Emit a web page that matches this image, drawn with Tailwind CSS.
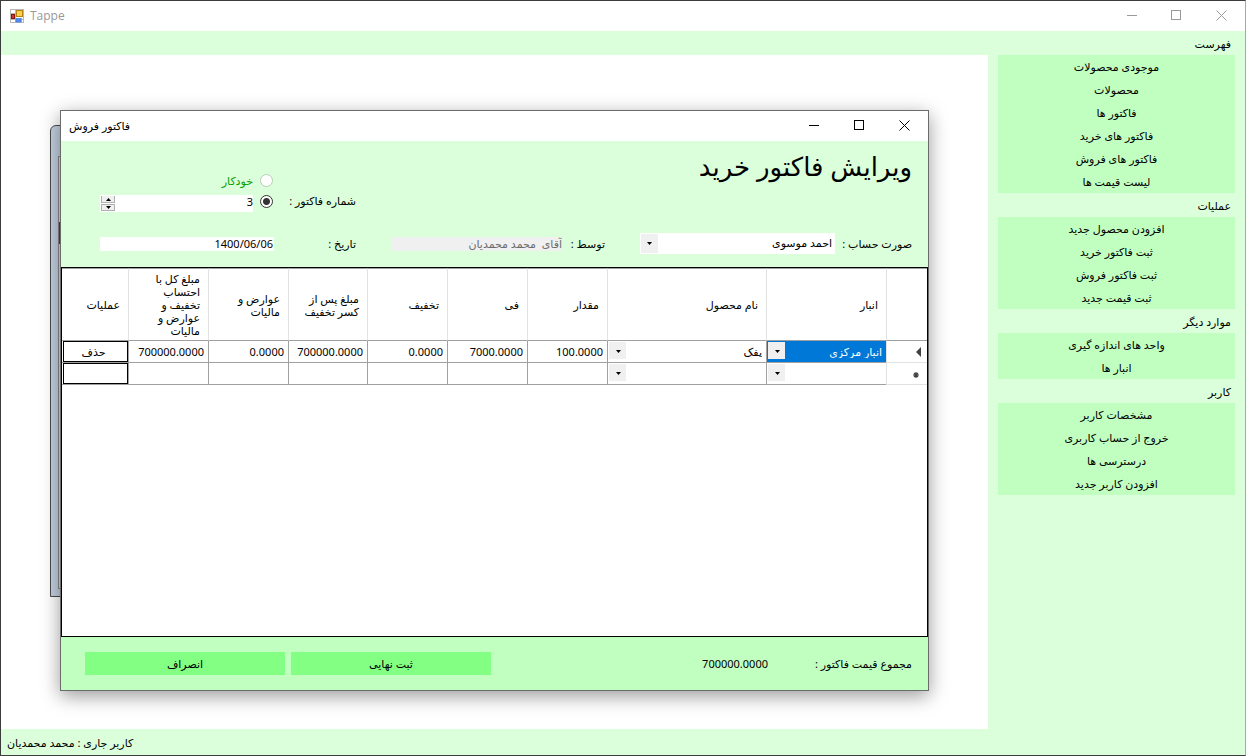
<!DOCTYPE html>
<html lang="fa" dir="rtl">
<head>
<meta charset="utf-8">
<title>Tappe</title>
<script src="https://cdn.jsdelivr.net/npm/@tailwindcss/browser@4"></script>
</head>
<body class="relative flex min-h-screen flex-col border border-[#3c3c3c] border-r-[#a8a8a8] bg-white font-['Noto_Sans','DejaVu_Sans',sans-serif] text-[11px] leading-[13px] text-black">

<header dir="ltr" class="flex h-[30px] items-center justify-between pl-[9px]">
  <div class="flex items-center gap-[6px]">
    <svg class="size-[14px]" viewBox="0 0 14 14" aria-hidden="true">
      <rect x=".5" y=".5" width="13" height="13" fill="#fff" stroke="#b8b8b8"/>
      <path d="M5.5 0v14M0 4.500h6M0 10.500h14M11.500 9v5" stroke="#b8b8b8" fill="none"/>
      <rect x="1.500" y="5.500" width="3" height="4" fill="#c8372f" stroke="#8c1410"/>
      <rect x="6.500" y="1.500" width="6" height="6" fill="#fbcf4a" stroke="#b5850f"/>
      <rect x="6" y="9.500" width="5" height="3.500" fill="#4f8ef0" stroke="#3c72d0" stroke-width=".6"/>
    </svg>
    <span class="font-['Open_Sans',sans-serif] text-[12px] leading-4 text-[#999999]">Tappe</span>
  </div>
  <div class="flex text-[#999999]">
    <button aria-label="Minimize" class="flex h-[30px] w-[45px] items-center justify-center pr-px pb-px"><svg class="size-[11px]" viewBox="0 0 11 11" fill="none" stroke="currentColor"><path d="M.5 5.500H10.500" shape-rendering="crispEdges"/></svg></button>
    <button aria-label="Maximize" class="flex h-[30px] w-[45px] items-center justify-center pb-px"><svg class="size-[11px]" viewBox="0 0 11 11" fill="none" stroke="currentColor"><rect x=".5" y=".5" width="9" height="9" shape-rendering="crispEdges"/></svg></button>
    <button aria-label="Close" class="flex h-[30px] w-[46px] items-center justify-center pr-px pb-px"><svg class="size-[11px]" viewBox="0 0 11 11" fill="none" stroke="currentColor"><path d="M.5.5l10 10M10.500.5l-10 10"/></svg></button>
  </div>
</header>

<div class="flex flex-1">
  <nav class="w-[257px] bg-[#dbffdb] px-[10px]">
    <h2 class="flex h-6 items-center pt-px pr-1">فهرست</h2>
    <ul class="bg-[#c1ffc1] text-center">
      <li><button class="block h-[23px] w-full">موجودی محصولات</button></li>
      <li><button class="block h-[23px] w-full">محصولات</button></li>
      <li><button class="block h-[23px] w-full">فاکتور ها</button></li>
      <li><button class="block h-[23px] w-full">فاکتور های خرید</button></li>
      <li><button class="block h-[23px] w-full">فاکتور های فروش</button></li>
      <li><button class="block h-[23px] w-full">لیست قیمت ها</button></li>
    </ul>
    <h2 class="flex h-6 items-center pt-px pr-1">عملیات</h2>
    <ul class="bg-[#c1ffc1] text-center">
      <li><button class="block h-[23px] w-full">افزودن محصول جدید</button></li>
      <li><button class="block h-[23px] w-full">ثبت فاکتور خرید</button></li>
      <li><button class="block h-[23px] w-full">ثبت فاکتور فروش</button></li>
      <li><button class="block h-[23px] w-full">ثبت قیمت جدید</button></li>
    </ul>
    <h2 class="flex h-6 items-center pt-px pr-1">موارد دیگر</h2>
    <ul class="bg-[#c1ffc1] text-center">
      <li><button class="block h-[23px] w-full">واحد های اندازه گیری</button></li>
      <li><button class="block h-[23px] w-full">انبار ها</button></li>
    </ul>
    <h2 class="flex h-6 items-center pt-px pr-1">کاربر</h2>
    <ul class="bg-[#c1ffc1] text-center">
      <li><button class="block h-[23px] w-full">مشخصات کاربر</button></li>
      <li><button class="block h-[23px] w-full">خروج از حساب کاربری</button></li>
      <li><button class="block h-[23px] w-full">درسترسی ها</button></li>
      <li><button class="block h-[23px] w-full">افزودن کاربر جدید</button></li>
    </ul>
  </nav>
  <div class="flex flex-1 flex-col">
    <div class="h-6 bg-[#dbffdb]"></div>
    <main class="flex-1"></main>
    <footer class="flex h-[26px] items-center justify-end bg-[#dbffdb] pl-[6px]">کاربر جاری : محمد محمدیان</footer>
  </div>
</div>

<!-- Inactive child window behind the invoice -->
<div class="absolute top-[124px] left-[49px] h-[472px] w-[300px] rounded-t-md border border-[#4a4a4a] bg-[#c3d1e0] pt-[30px] pl-[7px]">
  <div class="h-[433px] border border-[#8a8a8a] bg-[#dcdcdc] pt-[65px]"><div class="h-[22px] bg-[#1c4f8a]"></div></div>
</div>

<!-- Invoice window -->
<section aria-label="فاکتور فروش" class="absolute top-[109px] left-[59px] flex h-[581px] w-[869px] flex-col border border-[#6b6b6b] bg-white shadow-[0_5px_18px_rgba(0,0,0,0.4)]">
  <div dir="ltr" class="flex h-[30px] items-center justify-between pl-2">
    <span class="text-[11px] leading-4">فاکتور فروش</span>
    <div class="flex">
      <button aria-label="Minimize" class="flex h-[30px] w-[45px] items-center justify-center pb-px"><svg class="size-[11px]" viewBox="0 0 11 11" fill="none" stroke="currentColor"><path d="M.5 5.500H10.500" shape-rendering="crispEdges"/></svg></button>
      <button aria-label="Maximize" class="flex h-[30px] w-[46px] items-center justify-center pb-px"><svg class="size-[11px]" viewBox="0 0 11 11" fill="none" stroke="currentColor"><rect x=".5" y=".5" width="9" height="9" shape-rendering="crispEdges"/></svg></button>
      <button aria-label="Close" class="flex h-[30px] w-[46px] items-center justify-center pr-px pb-px"><svg class="size-[11px]" viewBox="0 0 11 11" fill="none" stroke="currentColor"><path d="M.5.5l10 10M10.500.5l-10 10"/></svg></button>
    </div>
  </div>

  <form class="flex min-h-0 flex-1 flex-col">
    <div class="grid h-[126px] grid-cols-[77px_195px_35px_43px_170px_36px_82px_174px] grid-rows-[92px_21px] items-center bg-[#dbffdb] pr-4">
      <h1 class="col-span-6 self-start pt-1 text-[26px] leading-[42px]">ویرایش فاکتور خرید</h1>
      <span id="no" class="self-start pt-[53px]">شماره فاکتور :</span>
      <div class="self-start pt-[31px]" role="group" aria-labelledby="no">
        <div class="flex h-[17px] items-center gap-[7px]">
          <input id="auto" type="radio" name="mode" class="mr-[1px] size-[13px] appearance-none rounded-full border border-[#b5cfb5] bg-white">
          <label for="auto" class="text-[#00a000]">خودکار</label>
        </div>
        <div class="mt-[4px] flex h-[17px] items-center gap-[7px]">
          <input type="radio" name="mode" checked aria-label="دستی" class="mr-[1px] size-[13px] shrink-0 appearance-none rounded-full border border-[#333333] bg-[radial-gradient(circle,#333333_3px,#ffffff_4px)]">
          <div class="mt-1 flex h-[17px] min-w-0 flex-1 bg-white">
            <input type="text" value="3" aria-labelledby="no" class="mb-1 min-w-0 flex-1 bg-transparent">
            <div class="ml-px flex w-[14px] flex-col pt-px">
              <button type="button" aria-label="+" class="flex h-[7px] items-center justify-center border border-t-0 border-[#b0b0b0] bg-[#f0f0f0]"><svg class="h-[3px] w-[5px]" viewBox="0 0 5 3"><path d="M0 3L2.500 0 5 3z"/></svg></button>
              <button type="button" aria-label="-" class="mt-px flex h-[7px] items-center justify-center border border-[#b0b0b0] bg-[#f0f0f0]"><svg class="h-[3px] w-[5px]" viewBox="0 0 5 3"><path d="M0 0L2.500 3 5 0z"/></svg></button>
            </div>
          </div>
        </div>
      </div>

      <label for="acc">صورت حساب :</label>
      <div class="relative">
        <select id="acc" class="block h-[21px] w-full appearance-none bg-white pr-[3px] pb-px leading-5"><option>احمد موسوی</option></select>
        <span class="pointer-events-none absolute inset-y-px left-px flex w-[17px] items-center justify-center bg-[#f0f0f0]"><svg class="h-[3px] w-[5px]" viewBox="0 0 5 3"><path d="M0 0L2.500 3 5 0z"/></svg></span>
      </div>
      <span></span>
      <label for="by">توسط :</label>
      <input id="by" type="text" disabled value="آقای  محمد محمدیان" class="h-[14px] w-full bg-[#f0f0f0] pb-px text-[#6d6d6d]">
      <span></span>
      <label for="date">تاریخ :</label>
      <input id="date" type="text" value="1400/06/06" class="h-[14px] w-full bg-white pr-px pb-px">
    </div>

    <div class="min-h-0 flex-1 border border-black bg-white">
      <table class="w-full table-fixed border-separate border-spacing-0">
        <colgroup><col class="w-[41px]"><col class="w-[120px]"><col class="w-[159px]"><col class="w-[80px]"><col class="w-[80px]"><col class="w-[80px]"><col class="w-[79px]"><col class="w-[80px]"><col class="w-[80px]"><col></colgroup>
        <thead>
          <tr class="h-[73px]">
            <th class="border-t border-b border-l border-t-[#a0a0a0] border-b-[#a0a0a0] border-l-[#e2e2e2]"></th>
            <th class="border-t border-b border-l border-t-[#a0a0a0] border-b-[#a0a0a0] border-l-[#e2e2e2] p-0 pr-2 text-right font-normal">انبار</th>
            <th class="border-t border-b border-l border-t-[#a0a0a0] border-b-[#a0a0a0] border-l-[#e2e2e2] p-0 pr-2 text-right font-normal">نام محصول</th>
            <th class="border-t border-b border-l border-t-[#a0a0a0] border-b-[#a0a0a0] border-l-[#e2e2e2] p-0 pr-2 text-right font-normal">مقدار</th>
            <th class="border-t border-b border-l border-t-[#a0a0a0] border-b-[#a0a0a0] border-l-[#e2e2e2] p-0 pr-2 text-right font-normal">فی</th>
            <th class="border-t border-b border-l border-t-[#a0a0a0] border-b-[#a0a0a0] border-l-[#e2e2e2] p-0 pr-2 text-right font-normal">تخفیف</th>
            <th class="border-t border-b border-l border-t-[#a0a0a0] border-b-[#a0a0a0] border-l-[#e2e2e2] p-0 pr-2 text-right font-normal whitespace-nowrap">مبلغ پس از<br>کسر تخفیف</th>
            <th class="border-t border-b border-l border-t-[#a0a0a0] border-b-[#a0a0a0] border-l-[#e2e2e2] p-0 pr-2 text-right font-normal whitespace-nowrap">عوارض و<br>مالیات</th>
            <th class="border-t border-b border-l border-t-[#a0a0a0] border-b-[#a0a0a0] border-l-[#e2e2e2] p-0 pr-2 text-right font-normal whitespace-nowrap">مبلغ کل با<br>احتساب<br>تخفیف و<br>عوارض و<br>مالیات</th>
            <th class="border-t border-b border-t-[#a0a0a0] border-b-[#a0a0a0] p-0 pr-2 text-right font-normal">عملیات</th>
          </tr>
        </thead>
        <tbody>
          <tr class="h-[22px]">
            <td class="border-b border-l border-b-[#e2e2e2] border-l-[#e2e2e2] p-0"><svg class="mr-[6px] h-[10px] w-[5px]" viewBox="0 0 5 10" fill="#404040"><path d="M5 0v10L0 5z"/></svg></td>
            <td class="border-b border-l border-[#a0a0a0] p-0"><div class="relative h-[21px] bg-[#0078d7]"><select aria-label="انبار" class="block h-[21px] w-full appearance-none bg-transparent pr-1 text-white"><option>انبار مركزي</option></select><span class="pointer-events-none absolute top-px left-px flex h-[17px] w-[17px] items-center justify-center bg-[#f0f0f0] pt-px pl-px"><svg class="h-[3px] w-[5px]" viewBox="0 0 5 3"><path d="M0 0L2.500 3 5 0z"/></svg></span></div></td>
            <td class="border-b border-l border-[#a0a0a0] p-0"><div class="relative h-[21px]"><select aria-label="نام محصول" class="block h-[21px] w-full appearance-none bg-transparent pr-1"><option>پفک</option></select><span class="pointer-events-none absolute top-px left-px flex h-[17px] w-[17px] items-center justify-center bg-[#f0f0f0] pt-px pl-px"><svg class="h-[3px] w-[5px]" viewBox="0 0 5 3"><path d="M0 0L2.500 3 5 0z"/></svg></span></div></td>
            <td class="border-b border-l border-[#a0a0a0] p-0 pr-1">100.0000</td>
            <td class="border-b border-l border-[#a0a0a0] p-0 pr-1">7000.0000</td>
            <td class="border-b border-l border-[#a0a0a0] p-0 pr-1">0.0000</td>
            <td class="border-b border-l border-[#a0a0a0] p-0 pr-1">700000.0000</td>
            <td class="border-b border-l border-[#a0a0a0] p-0 pr-1">0.0000</td>
            <td class="border-b border-l border-[#a0a0a0] p-0 pr-1">700000.0000</td>
            <td class="border-b border-[#a0a0a0] p-0 pl-px"><button type="button" class="block h-[21px] w-full border border-black pr-1">حذف</button></td>
          </tr>
          <tr class="h-[22px]">
            <td class="border-b border-l border-b-[#e2e2e2] border-l-[#e2e2e2] p-0"><svg class="mt-[3px] mr-2 size-[6px]" viewBox="0 0 6 6" stroke="#404040" stroke-width="1.200"><path d="M3 0v6M0 3h6M1 1l4 4M5 1l-4 4"/></svg></td>
            <td class="border-b border-l border-[#a0a0a0] p-0"><div class="relative h-[21px]"><select aria-label="انبار" class="block h-[21px] w-full appearance-none bg-transparent"><option></option></select><span class="pointer-events-none absolute top-px left-px flex h-[17px] w-[17px] items-center justify-center bg-[#f0f0f0] pt-px pl-px"><svg class="h-[3px] w-[5px]" viewBox="0 0 5 3"><path d="M0 0L2.500 3 5 0z"/></svg></span></div></td>
            <td class="border-b border-l border-[#a0a0a0] p-0"><div class="relative h-[21px]"><select aria-label="نام محصول" class="block h-[21px] w-full appearance-none bg-transparent"><option></option></select><span class="pointer-events-none absolute top-px left-px flex h-[17px] w-[17px] items-center justify-center bg-[#f0f0f0] pt-px pl-px"><svg class="h-[3px] w-[5px]" viewBox="0 0 5 3"><path d="M0 0L2.500 3 5 0z"/></svg></span></div></td>
            <td class="border-b border-l border-[#a0a0a0] p-0"></td>
            <td class="border-b border-l border-[#a0a0a0] p-0"></td>
            <td class="border-b border-l border-[#a0a0a0] p-0"></td>
            <td class="border-b border-l border-[#a0a0a0] p-0"></td>
            <td class="border-b border-l border-[#a0a0a0] p-0"></td>
            <td class="border-b border-l border-[#a0a0a0] p-0"></td>
            <td class="border-b border-[#a0a0a0] p-0 pl-px"><button type="button" aria-label="حذف" class="block h-[21px] w-full border border-black"></button></td>
          </tr>
        </tbody>
      </table>
    </div>

    <div class="flex h-[53px] items-center bg-[#c1ffc1] pr-4 pl-6">
      <span>مجموع قیمت فاکتور :</span>
      <output class="mr-[47px]">700000.0000</output>
      <div class="mr-auto flex gap-[6px]">
        <button type="submit" class="h-[23px] w-[200px] bg-[#83ff83]">ثبت نهایی</button>
        <button type="button" class="h-[23px] w-[200px] bg-[#83ff83]">انصراف</button>
      </div>
    </div>
  </form>
</section>
</body>
</html>
